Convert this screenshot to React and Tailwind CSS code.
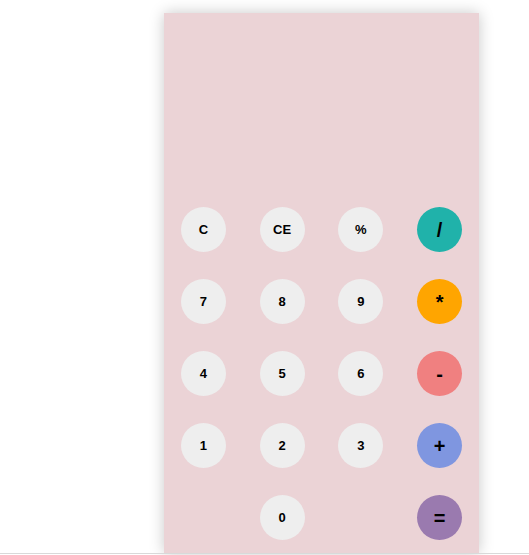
import React from 'react';

const rows = [
    [{ k: 'C' }, { k: 'CE' }, { k: '%' }, { k: '/', op: 'bg-[#20b2aa]' }],
    [{ k: '7' }, { k: '8' }, { k: '9' }, { k: '*', op: 'bg-[#ffa500]' }],
    [{ k: '4' }, { k: '5' }, { k: '6' }, { k: '-', op: 'bg-[#f08080]' }],
    [{ k: '1' }, { k: '2' }, { k: '3' }, { k: '+', op: 'bg-[#7f96e0]' }],
    [null, { k: '0' }, null, { k: '=', op: 'bg-[#9a7aaf]' }],
];

const Key = ({ item }) => {
    if (!item) return <div className="h-[45px]" />;
    const base = 'w-[45px] h-[45px] rounded-full flex items-center justify-center font-bold text-black';
    return (
        <div className="flex justify-center">
            <button
                className={`${base} ${item.op ? `${item.op} text-[20px]` : 'bg-[#eeeeee] text-[13px]'}`}
            >
                {item.k}
            </button>
        </div>
    );
};

export default function App() {
    return (
        <div className="w-[529px] h-[555px] bg-white overflow-hidden font-['Liberation_Sans',Arial,sans-serif]">
            <div className="pt-[13px] pl-[164px]">
                <div className="w-[315px] h-[540px] bg-[#ebd3d6] shadow-[0_0_14px_rgba(0,0,0,0.22)] flex flex-col">
                    {/* display */}
                    <div className="h-[194px]" />
                    <div className="grid grid-cols-4 gap-y-[27px]">
                        {rows.flat().map((item, i) => (
                            <Key key={i} item={item} />
                        ))}
                    </div>
                </div>
            </div>
            <div className="relative h-px bg-[#d9d9d9]" />
        </div>
    );
}
